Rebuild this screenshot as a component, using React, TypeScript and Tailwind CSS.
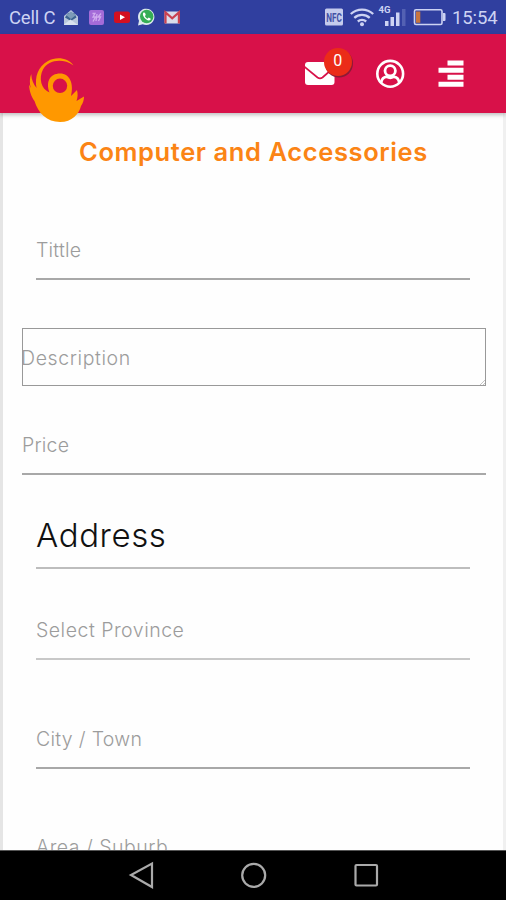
import React from "react";

const label = "block h-[30px] whitespace-nowrap text-[19.5px] font-light leading-[30px] text-[#9c9c9c]";

function StatusBar() {
  return (
    <div className="flex h-[34px] shrink-0 items-center bg-[#303f9f] pl-[9px] pt-[2px] font-[Roboto,sans-serif] text-[#cdd3f3]">
      <span className="w-[55px] whitespace-nowrap text-[18.5px] leading-none tracking-[-0.2px]">Cell C</span>
      <svg className="h-[34px] w-[120px]" viewBox="64 1 120 34">
        <path d="M63.500 16.500 71 10l7 6.500V25H63.500Z" fill="#b9c7dc" />
        <path d="M65 17.500 68 13h6.500l2 4.500-5.700 3.500Z" fill="#3c6390" />
        <path d="m66 15 5-3.500 5 3.500-5 4Z" fill="#7c9bb8" />
        <path d="m63.500 25 7-5.500 7.500 5.500Z" fill="#d9e2ef" />
        <rect x="89" y="10" width="15" height="15" rx="2" fill="#a46bd8" />
        <path d="M92.500 13.500h2.500l-2 3.500h2.500l-2.500 4.500M97 14l-1 7M101 13.500l-3 3.500h2.500l-2 4" fill="none" stroke="#d0abef" strokeWidth="1.300" />
        <rect x="114" y="11.500" width="16" height="11.500" rx="2.500" fill="#d40f20" />
        <path d="m120 14.500 5 2.800-5 2.800Z" fill="#fff" />
        <path d="m138 25.500 1-4.700a8.200 8.200 0 1 1 3.700 3.500Z" fill="#dce9ec" />
        <circle cx="146.700" cy="16.500" r="6.700" fill="#35ad55" />
        <path d="M143.500 12.500c-1.600 1.700.2 5 2.500 6.700 2.500 1.800 4.500 1.500 4.800-.5l-2.100-1.100-1.200 1.200c-1.200-.5-2.200-1.500-2.700-2.700l1-1.100-.8-2.300Z" fill="#fff" />
        <rect x="164.500" y="11.500" width="15.500" height="12" rx="1" fill="#dadcea" />
        <path d="M165.500 23.500v-11l6.700 5.800 6.700-5.800v11" fill="none" stroke="#c94150" strokeWidth="2.200" />
      </svg>
      <svg className="ml-[140px] h-[34px] w-[124px]" viewBox="324 1 124 34">
        <rect x="325" y="8.500" width="18" height="17" rx="1.500" fill="#c5cbed" />
        <text x="334" y="21.800" textAnchor="middle" fontFamily="Roboto" fontWeight="700" fontSize="12" textLength="15.500" lengthAdjust="spacingAndGlyphs" fill="#4352a5">NFC</text>
        <g fill="none" stroke="#cdd3f3" strokeWidth="2.300">
          <path d="M350.800 14a16.500 16.500 0 0 1 22.400 0" />
          <path d="M354.300 17.800a11.500 11.500 0 0 1 15.400 0" />
          <path d="M357.800 21.500a6.500 6.500 0 0 1 8.400 0" />
        </g>
        <circle cx="362" cy="24.300" r="2" fill="#cdd3f3" />
        <text x="378.500" y="12.800" fontFamily="Roboto" fontWeight="700" fontSize="9.500" textLength="12" lengthAdjust="spacingAndGlyphs" fill="#cdd3f3">4G</text>
        <path d="M385 21h3.500v5H385ZM390.500 17h3.500v9h-3.500ZM396 12.500h3.500V26H396Z" fill="#cdd3f3" />
        <path d="M402 9h3.500v17H402Z" fill="#5361b3" />
        <rect x="414.500" y="9.800" width="27.500" height="14.700" rx="1.500" fill="none" stroke="#cdd3f3" strokeWidth="1.600" />
        <path d="M443 13h1.500q1 0 1 1v6q0 1-1 1H443" fill="#cdd3f3" />
        <path d="M416 11.500h4.300v11.300H416Z" fill="#c7753f" />
      </svg>
      <span className="ml-[4px] whitespace-nowrap text-[18.500px] leading-none tracking-[-0.100px]">15:54</span>
    </div>
  );
}

function Logo() {
  return (
    <svg className="absolute left-[28px] top-[22px] h-[68px] w-[60px]" viewBox="28 56 60 68">
      <path d="M73.500 65.500C68 57.500 56 56.500 48 61C38 66.500 34.500 77 36.500 88C33.500 84 31.500 80 31.200 74C29.500 78 29.500 84 30.800 88L29 84.500C29.500 92 31.500 97 34.500 101C38 113 47 122 60 122C72 122 79 114 81 106C83 103 84 100 84 96.500L76.500 101C77.800 97.500 78 94 77 90L71 96C74 84 70 73.500 60 73.500C50 73.500 45.500 82 49.500 92.500C41 89 38.500 78 43 69.500C48 60.500 62 57.500 73.500 65.500Z" fill="#ff9800" />
      <circle cx="60" cy="85.800" r="7.200" fill="#d81149" />
    </svg>
  );
}

function Header() {
  return (
    <header className="relative z-10 flex h-[79px] shrink-0 items-start bg-[#d81149] pl-[304px] pt-[10px] shadow-[0_2px_4px_rgba(0,0,0,0.25)]">
      <Logo />
      <svg className="h-[50px] w-[164px]" viewBox="304 44 164 50" fill="none">
        <rect x="305" y="62" width="29.500" height="23" rx="3" fill="#fff" />
        <path d="m304 66.500 13.500 11q2.500 1.600 5 0l12.500-11" stroke="#d81149" strokeWidth="1.700" />
        <circle cx="339" cy="63.500" r="14" fill="#8d1a36" />
        <circle cx="338" cy="62" r="14" fill="#eb2c18" />
        <text x="337.800" y="65.500" textAnchor="middle" fontFamily="Roboto" fontSize="16" fill="#fff">0</text>
        <g stroke="#fff">
          <circle cx="390.200" cy="73.800" r="12.900" strokeWidth="2.600" />
          <circle cx="390.200" cy="70.800" r="5.200" strokeWidth="2.800" />
          <path d="M381.200 82.500c.6-4 2.700-5.700 5.500-5.700 1.800 1 5.200 1 7 0 2.800 0 4.900 1.700 5.500 5.700" strokeWidth="2.700" />
        </g>
        <path d="M447.500 60.500h16v5h-16ZM438.500 67.700h25v5h-25ZM447.500 74.800h16v5h-16ZM438.500 81.800h25v5h-25Z" fill="#fff" />
      </svg>
    </header>
  );
}

export default function App() {
  return (
    <div className="flex h-[900px] w-[506px] flex-col overflow-hidden bg-white font-[Inter,'Open_Sans',sans-serif]">
      <StatusBar />
      <Header />
      <main className="flex h-[737px] shrink-0 flex-col overflow-hidden border-x-[3px] border-l-[#e5e5e5] border-r-[#f0f0f0] bg-[#fefefe] px-[19px]">
        <h1 className="h-[78px] shrink-0 whitespace-nowrap pl-[57px] text-[25.5px] font-semibold leading-[78px] tracking-[0.6px] text-[#fb8415]">Computer and Accessories</h1>
        <div className="mx-[14px] h-[89px] shrink-0 border-b-2 border-[#a8a8a8] pt-[44px]">
          <span className={label + " tracking-[0.2px]"}>Tittle</span>
        </div>
        <div className="relative mt-[48px] h-[58px] w-[464px] shrink-0 border border-[#999] pt-[14px]">
          <span className={label + " -ml-[2px] tracking-[0.6px]"}>Description</span>
          <svg className="absolute bottom-0 right-0 h-[5px] w-[5px]" viewBox="0 0 5 5"><path d="m0 5 5-5M3 5l2-2" stroke="#aaa" strokeWidth="0.700" /></svg>
        </div>
        <div className="mt-[30px] h-[59px] w-[464px] shrink-0 border-b-2 border-[#a8a8a8] pt-[14px]">
          <span className={label + " tracking-[0.2px]"}>Price</span>
        </div>
        <h2 className="mx-[14px] h-[94px] shrink-0 border-b-2 border-[#bdbdbd] pt-[38px] text-[33px] font-light leading-[45px] tracking-[0.6px] text-[#111]">Address</h2>
        <div className="mx-[14px] h-[91px] shrink-0 border-b-2 border-[#c8c8c8] pt-[46px]">
          <span className={label + " tracking-[0.5px]"}>Select Province</span>
        </div>
        <div className="mx-[14px] h-[109px] shrink-0 border-b-2 border-[#a8a8a8] pt-[64px]">
          <span className={label + " tracking-[0.3px]"}>City / Town</span>
        </div>
        <div className="mx-[14px] shrink-0 pt-[63px]">
          <span className={label + " tracking-[0.5px]"}>Area / Suburb</span>
        </div>
      </main>
      <nav className="flex h-[50px] shrink-0 items-center border-t border-[#555] bg-black pl-[126px]">
        <svg className="h-[49px] w-[256px]" viewBox="126 851 256 49" fill="none" stroke="#aaa" strokeWidth="2.200">
          <path d="M152 863.500v23.500l-21-12Z" />
          <circle cx="253.700" cy="875.300" r="11.500" />
          <rect x="355.500" y="865" width="21.500" height="20.500" rx="1" />
        </svg>
      </nav>
    </div>
  );
}
